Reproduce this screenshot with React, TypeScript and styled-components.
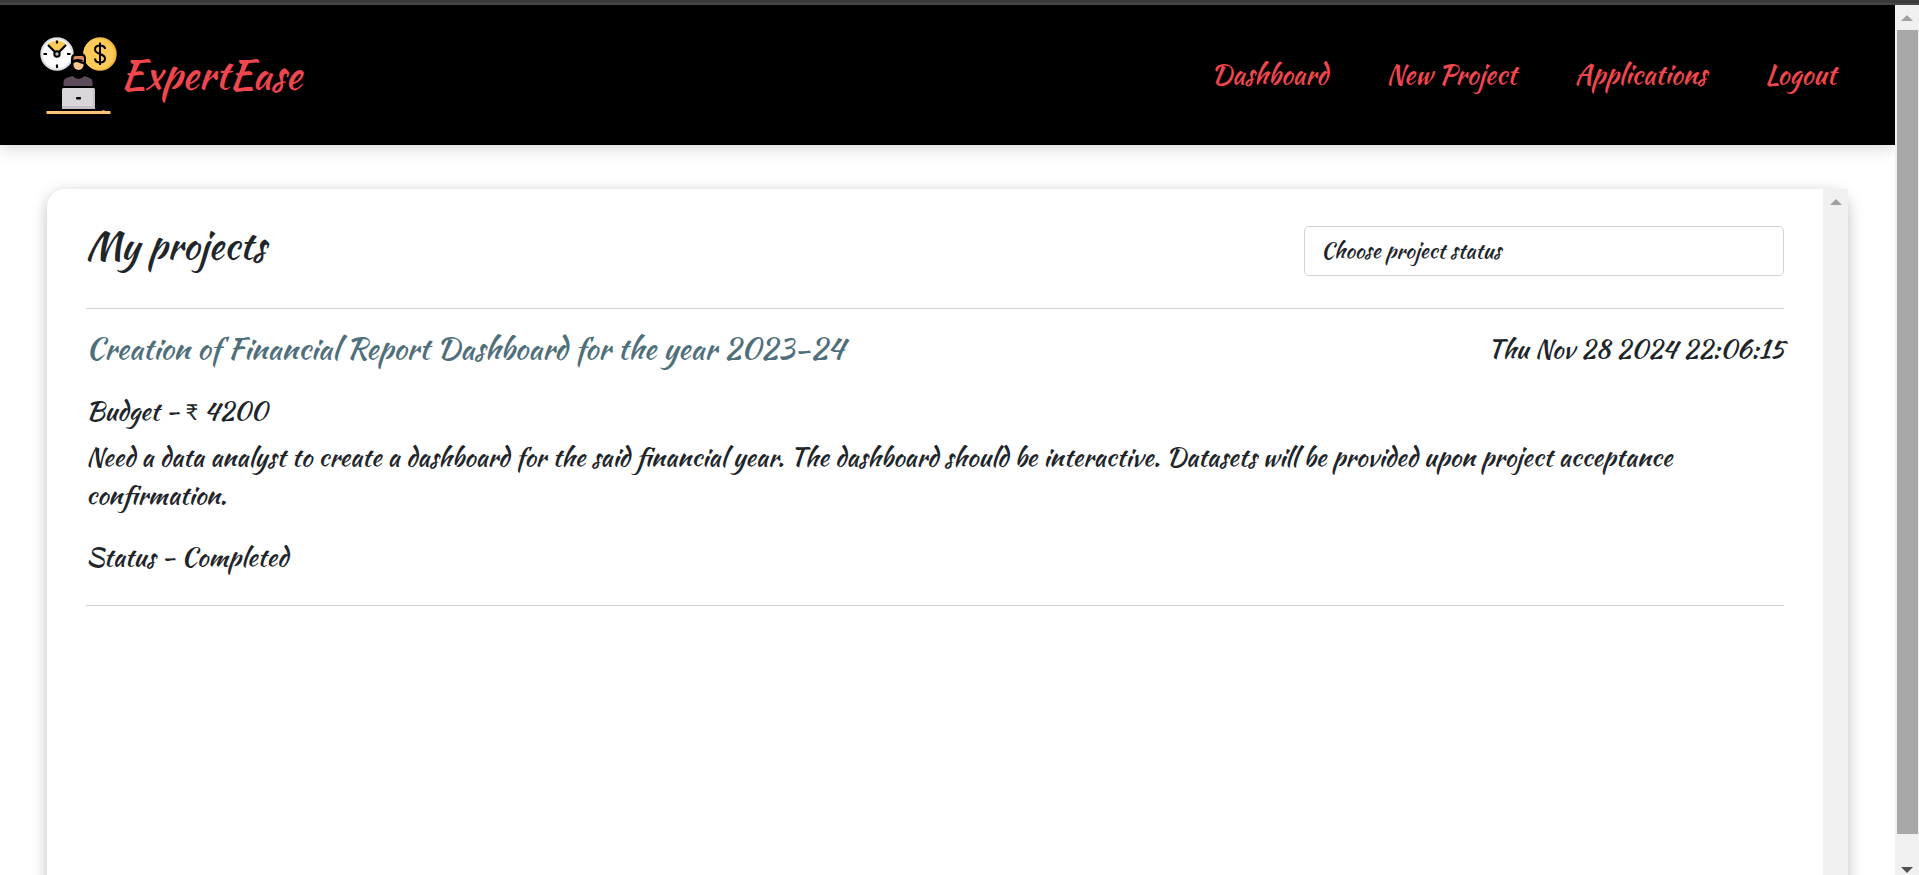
import React from 'react';
import styled, { createGlobalStyle } from 'styled-components';

const GlobalStyle = createGlobalStyle`
  * { box-sizing: border-box; }
  body {
    margin: 0;
    background: #fff;
    color: #212529;
    font-family: 'Kaushan Script', 'Lato', sans-serif;
    overflow: hidden;
  }
`;

const Window = styled.div`
  display: grid;
  grid-template-rows: 5px 870px;
  height: 875px;
  overflow: hidden;
`;
const WindowEdge = styled.div`
  background: #3b3b3b;
  border-bottom: 2px solid #464646;
`;
const Viewport = styled.div`
  display: flex;
  min-height: 0;
`;
const Page = styled.div`
  flex: 1;
  min-width: 0;
  overflow: hidden;
`;
const Header = styled.header`
  display: flex;
  align-items: center;
  justify-content: space-between;
  height: 140px;
  padding: 0 59px 0 40px;
  background: #000;
  box-shadow: 0 4px 15px rgba(0, 0, 0, 0.15);
`;
const Brand = styled.a`
  display: flex;
  align-items: center;
  gap: 3px;
  color: #f0464e;
  font-size: 40.5px;
  line-height: 60px;
`;
const BrandName = styled.span`
  margin-bottom: 0;
`;
const Nav = styled.nav`
  display: flex;
  gap: 58.4px;
`;
const NavLink = styled.a`
  color: #f0464e;
  font-size: 27px;
  line-height: 40px;
`;
const Card = styled.main`
  display: flex;
  height: 900px;
  margin: 44px 47px 0;
  border-radius: 18px;
  background: #fff;
  box-shadow: 0 4px 15px rgba(0, 0, 0, 0.25);
`;
const CardBody = styled.div`
  flex: 1;
  min-width: 0;
  padding: 37px 39px 0;
`;
const TitleBar = styled.div`
  display: flex;
  justify-content: space-between;
  height: 82px;
`;
const Heading = styled.h2`
  margin: -10px 0 0;
  font-size: 37.9px;
  font-weight: 400;
  line-height: 60px;
`;
const StatusSelect = styled.div`
  width: 480px;
  height: 50px;
  padding: 0 16px;
  border: 1px solid #ced4da;
  border-radius: 5px;
  font-size: 21.65px;
  line-height: 47px;
`;
const Project = styled.article`
  height: 298px;
  padding-top: 15px;
  border: solid #d3d3d4;
  border-width: 1px 0;
`;
const ProjectHead = styled.div`
  display: flex;
  justify-content: space-between;
  align-items: center;
  height: 48px;
`;
const ProjectTitle = styled.h4`
  margin: 0;
  color: #4f6f7a;
  font-size: 30.26px;
  font-weight: 400;
`;
const Text = styled.p<{ $top?: number }>`
  margin: ${(p) => p.$top ?? 0}px 0 0;
  font-size: 25.93px;
  line-height: 38px;
`;
const Rupee = styled.span`
  font-family: 'Lato', sans-serif;
  font-size: 22px;
`;
const ScrollTrack = styled.div<{ $width: number }>`
  flex: none;
  display: flex;
  flex-direction: column;
  align-items: center;
  width: ${(p) => p.$width}px;
  background: #f0f0f0;
`;
const ArrowUp = styled.div`
  margin: 10px 0 9px;
  border: solid transparent;
  border-width: 0 6px 6px;
  border-bottom-color: #a0a0a0;
`;
const ArrowDown = styled.div`
  margin-top: 33px;
  border: solid transparent;
  border-width: 6px 6px 0;
  border-top-color: #505050;
`;
const Thumb = styled.div`
  width: 21px;
  height: 804px;
  background: #a8a8a8;
`;

const Logo = () => (
  <svg width="77" height="77" viewBox="0 0 77 77">
    <circle cx="17" cy="17" r="16.7" fill="#dfe0e4" />
    <circle cx="17" cy="17" r="14.5" fill="#fff" />
    <path d="M17 17 7.5 7.5a13.5 13.5 0 0 1 19 0z" fill="#ffcb58" />
    <path d="M8 8l9 9 9-9M17 3.5v3M17 27.5v3.5M3.5 17h3.5M27 17h3.5" fill="none" stroke="#000" strokeWidth="2.2" />
    <circle cx="17" cy="17" r="2.7" fill="#bbb" stroke="#000" strokeWidth="2" />
    <circle cx="60" cy="17" r="16.7" fill="#f6b83c" />
    <circle cx="58.8" cy="17" r="15.5" fill="#ffcb58" />
    <path d="M65 12c0-2.5-2-3.5-5-3.5s-5 1.5-5 4c0 5.5 10 3.5 10 9 0 2.5-2 4-5 4s-5-1.5-5-4M60 5.5v22.5" fill="none" stroke="#000" strokeWidth="2" />
    <path d="M31 33V22q0-5.5 5-5.5h6q4 0 4 5.5v11z" fill="#000" />
    <path d="M33.5 24h10v4a5 5 0 0 1-10 0z" fill="#ffc88a" />
    <path d="M33.5 23v-2.5q0-1.5 2-1.5h6.500q2 0 2 2v3q-2.500-2-6-2-3 0-4.500 1z" fill="#d98c62" />
    <path d="M33 25.5q3-2.5 6-1 3 1.5 5.500 1.500" fill="none" stroke="#000" strokeWidth="2" />
    <path d="M23.5 49v-4q0-3 3-4l6-2q6 6 12 0l5 2q3 1 3 4v4z" fill="#5d4d5c" />
    <rect x="22" y="51" width="33" height="21" rx="1.5" fill="#d8d6da" />
    <path d="M22 69h31V52h2v20H22z" fill="#c3c1c6" />
    <rect x="36" y="60" width="5" height="2.5" rx="1" fill="#000" />
    <path d="M6.5 74h55q1.5-1.5 4 0h5v3h-64z" fill="#ffc27a" />
  </svg>
);

const NAV = ['Dashboard', 'New Project', 'Applications', 'Logout'];

export default function App() {
  return (
    <Window>
      <GlobalStyle />
      <WindowEdge />
      <Viewport>
        <Page>
          <Header>
            <Brand>
              <Logo />
              <BrandName>ExpertEase</BrandName>
            </Brand>
            <Nav>
              {NAV.map((n) => (
                <NavLink key={n}>{n}</NavLink>
              ))}
            </Nav>
          </Header>
          <Card>
            <CardBody>
              <TitleBar>
                <Heading>My projects</Heading>
                <StatusSelect>Choose project status</StatusSelect>
              </TitleBar>
              <Project>
                <ProjectHead>
                  <ProjectTitle>Creation of Financial Report Dashboard for the year 2023-24</ProjectTitle>
                  <Text $top={2}>Thu Nov 28 2024 22:06:15</Text>
                </ProjectHead>
                <Text $top={20}>
                  Budget - <Rupee>₹</Rupee> 4200
                </Text>
                <Text $top={7}>
                  Need a data analyst to create a dashboard for the said financial year. The dashboard should be
                  interactive. Datasets will be provided upon project acceptance confirmation.
                </Text>
                <Text $top={24}>Status - Completed</Text>
              </Project>
            </CardBody>
            <ScrollTrack $width={25}>
              <ArrowUp />
            </ScrollTrack>
          </Card>
        </Page>
        <ScrollTrack $width={24}>
          <ArrowUp />
          <Thumb />
          <ArrowDown />
        </ScrollTrack>
      </Viewport>
    </Window>
  );
}
